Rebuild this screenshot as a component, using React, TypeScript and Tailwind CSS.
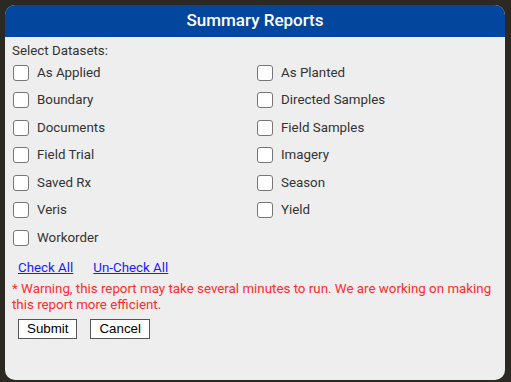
import React from "react";

const left = ["As Applied", "Boundary", "Documents", "Field Trial", "Saved Rx", "Veris", "Workorder"];
const right = ["As Planted", "Directed Samples", "Field Samples", "Imagery", "Season", "Yield"];

function Item({ label }: { label: string }) {
  return (
    <label className="flex items-center h-[27.5px]">
      <span className="ml-[1px] w-[16px] h-[16px] rounded-[3px] border border-[#767676] bg-white shrink-0" />
      <span className="ml-[8px] text-[13.33px] text-[#333333]">{label}</span>
    </label>
  );
}

export default function App() {
  return (
    <div
      className="w-[511px] h-[382px] bg-[#2c2922] p-[5px] overflow-hidden"
      style={{ fontFamily: "Roboto, 'Liberation Sans', sans-serif" }}
    >
      <div className="w-[500px] h-[375px] rounded-[10px] bg-[#eeeeee] overflow-hidden flex flex-col">
        <div className="h-[32px] bg-[#02469d] flex items-center justify-center text-white text-[17px] font-medium">
          Summary Reports
        </div>
        <div className="px-[7px] pt-[6px]">
          <div className="text-[13.33px] leading-[16px] text-[#333333]">Select Datasets:</div>
          <div className="grid grid-cols-[244px_1fr]">
            <div className="flex flex-col">
              {left.map((l) => (
                <Item key={l} label={l} />
              ))}
            </div>
            <div className="flex flex-col">
              {right.map((l) => (
                <Item key={l} label={l} />
              ))}
            </div>
          </div>
          <div className="flex gap-[20px] pl-[6px] mt-[8px] text-[13.33px] leading-[16px]">
            <a href="#" className="text-[#1a1aff] underline">Check All</a>
            <a href="#" className="text-[#1a1aff] underline">Un-Check All</a>
          </div>
          <div className="mt-[5px] text-[13.33px] leading-[16px] text-[#ff2b2b] w-[486px]">
            * Warning, this report may take several minutes to run. We are working on making this report more efficient.
          </div>
          <div className="flex gap-[13px] pl-[6px] mt-[6px]">
            <button
              className="h-[20px] px-[8px] border border-[#555555] bg-white text-[13.33px] text-black leading-none"
              style={{ fontFamily: "'Liberation Sans', Arial, sans-serif" }}
            >
              Submit
            </button>
            <button
              className="h-[20px] px-[8px] border border-[#555555] bg-white text-[13.33px] text-black leading-none"
              style={{ fontFamily: "'Liberation Sans', Arial, sans-serif" }}
            >
              Cancel
            </button>
          </div>
        </div>
      </div>
    </div>
  );
}
